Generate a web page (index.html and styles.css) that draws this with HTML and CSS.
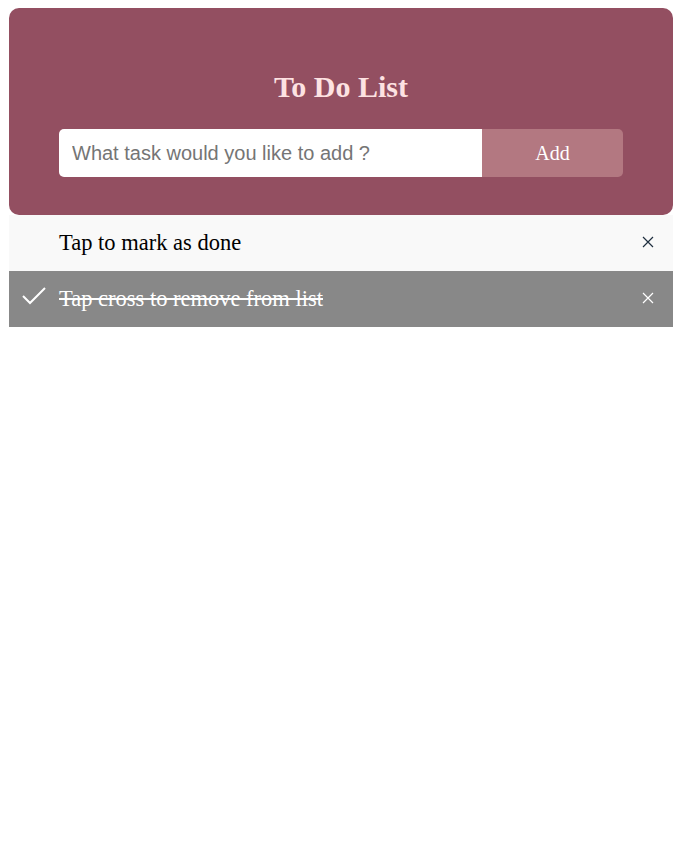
FILE: index.html
```html
<!DOCTYPE html>
<html>
<head>
<meta charset="utf-8">
<link rel="stylesheet" href="styles.css">
</head>
<body>
<div class="app">
  <div class="header">
    <h2 class="title">To Do List</h2>
    <div class="form">
      <input class="task-input" type="text" placeholder="What task would you like to add ?">
      <span class="add-btn">Add</span>
    </div>
  </div>
  <ul class="list">
    <li class="item">
      <span class="item-text">Tap to mark as done</span>
      <svg class="close" width="12" height="12" viewBox="0 0 12 12"><path d="M1 1L11 11M11 1L1 11" stroke="#1f2f3f" stroke-width="1.2" fill="none"/></svg>
    </li>
    <li class="item checked">
      <svg class="check" width="26" height="20" viewBox="0 0 26 20"><polyline points="1,9 8,16 23,1" stroke="#fff" stroke-width="2" fill="none"/></svg>
      <span class="item-text">Tap cross to remove from list</span>
      <svg class="close" width="12" height="12" viewBox="0 0 12 12"><path d="M1 1L11 11M11 1L1 11" stroke="#fff" stroke-width="1.2" fill="none"/></svg>
    </li>
  </ul>
</div>
</body>
</html>
```
FILE: styles.css
```css
body {
  margin: 8px 4px 8px 9px;
  background: #fff;
  font-family: "Liberation Serif", "Times New Roman", serif;
}
.app {
  width: 664px;
}
.header {
  background: #934f61;
  border-radius: 10px;
  padding: 62px 50px 38px 50px;
  display: flex;
  flex-direction: column;
  align-items: stretch;
}
.title {
  margin: 0 0 26px 0;
  text-align: center;
  color: #fde2e2;
  font-size: 30px;
  font-weight: bold;
  line-height: 33px;
}
.form {
  display: flex;
  height: 48px;
}
.task-input {
  flex: 1;
  border: none;
  margin: 0;
  border-radius: 5px 0 0 5px;
  padding: 0 13px;
  font-family: "Liberation Sans", Arial, sans-serif;
  font-size: 20px;
  color: #333;
  outline: none;
  background: #fff;
}
.task-input::placeholder {
  color: #757575;
}
.add-btn {
  width: 141px;
  background: #b37881;
  color: #fff;
  border-radius: 0 5px 5px 0;
  display: flex;
  align-items: center;
  justify-content: center;
  font-size: 20px;
}
.list {
  list-style: none;
  margin: 0;
  padding: 0;
}
.item {
  position: relative;
  height: 56px;
  display: flex;
  align-items: center;
  padding: 0 50px 0 50px;
  background: #f9f9f9;
  font-size: 22.5px;
  color: #000;
}
.item.checked {
  background: #888;
  color: #fff;
}
.item-text {
  line-height: 25px;
  padding-bottom: 2px;
}
.checked .item-text {
  text-decoration: line-through;
}
.check {
  position: absolute;
  left: 13px;
  top: 16px;
}
.close {
  position: absolute;
  right: 19px;
  top: 21px;
}
```
